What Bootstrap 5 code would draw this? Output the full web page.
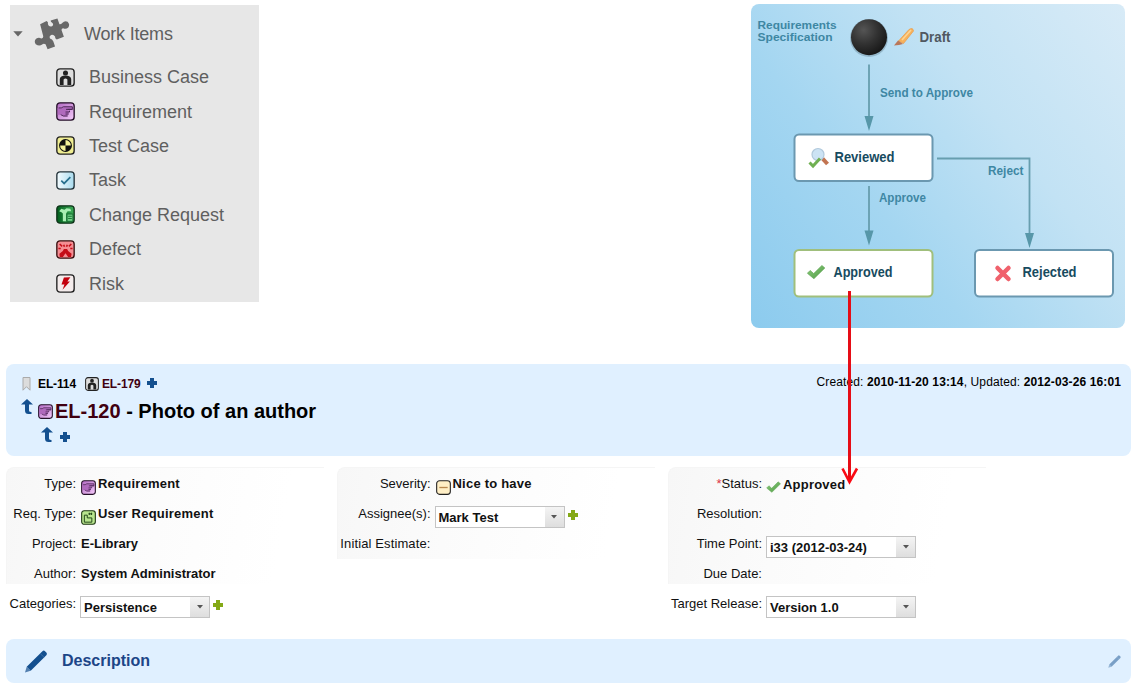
<!DOCTYPE html>
<html lang="en">
<head>
<meta charset="utf-8">
<meta name="viewport" content="width=device-width, initial-scale=1">
<title>EL-120 - Photo of an author</title>
<link href="https://cdn.jsdelivr.net/npm/bootstrap@5.3.0/dist/css/bootstrap.min.css" rel="stylesheet">
<style>
body{font-family:"Liberation Sans",Arial,sans-serif;font-size:13px;line-height:16px;color:#111;background:#fff;width:1134px;height:686px;overflow:hidden}
svg{display:block;flex:none}
.top-area{height:364px;padding:4px 9px 0 10px}
.tree{width:249px;height:297px;margin-top:1px;background:#e7e7e7;color:#5f5f5f;font-size:18px;line-height:20px}
.tree-head{height:55px;padding:3px 0 0 3px}
.tree-head svg:nth-child(2){margin-left:10px}
.tree-head span{margin-left:13px;letter-spacing:-.2px}
.tree-item{height:34.4px;padding-left:46px;gap:14px}
.flow{width:374px;height:324px;border-radius:8px;background:linear-gradient(52deg,#8ccbee 0%,#a4d6f1 35%,#c2e2f4 65%,#d8ebf7 100%)}
.flow text{font-family:"Liberation Sans Narrow","Liberation Sans",Arial,sans-serif;font-weight:700}
.panel-blue{margin:0 3px 0 6px;background:#e0f0ff;border-radius:8px}
.head{height:92px;padding:10px 10px 0 16px;font-size:12px;color:#000}
.ids{padding-top:2px;letter-spacing:-.12px}
.created{letter-spacing:.12px}
.maroon{color:#400010}
.navy{color:#14508f}
.green-plus{color:#84a917;margin:12px 0 0 3px}
.title-line{font-size:20px;line-height:24px;font-weight:700;margin-top:7px;margin-left:-1px}
.title-line .arrow-up{margin:-9px 5px 0 0}
.sub-line{margin:4px 0 0 19px;gap:7px}
.fields{padding:11px 0 0 6px;height:183px}
.field-col{width:331px}
.field-bg{background:linear-gradient(100deg,#f7f7f7 0%,#fbfbfb 35%,#fff 85%);border-radius:8px 0 0 0;width:318px;border-top:1px solid #f5f5f5;border-left:1px solid #f5f5f5}
.f-row{height:30px}
.f-label{text-align:right;flex:none}
.f-value{font-weight:700;margin-left:5px}
.f-icon{gap:2px;letter-spacing:.22px}
.f-icon svg{margin-top:4px}
.combo{height:22px;border:1px solid #c4c4c4;background:#fff;margin-top:8px;margin-left:-1px;font-weight:700}
.combo>span:first-child{padding:1px 0 0 3px}
.combo-btn{width:19px;background:linear-gradient(#f4f4f4,#dedede)}
.w-s{width:130px}.w-l{width:150px}
.desc{height:44px;padding:0 10px 0 18px;color:#1c4587}
.link-arrow{left:839px;top:290px}
.c1 .f-label{width:69px}.c2 .f-label{width:92.500px}.c3 .f-label{width:93px}
</style>
</head>
<body class="position-relative">
<svg width="0" height="0" class="position-absolute">
<defs>
<linearGradient id="gp" x1="0" x2="1" y1="0" y2="1"><stop offset="0" stop-color="#b066c0"/><stop offset="1" stop-color="#f6cdfc"/></linearGradient>
<linearGradient id="gg" x1="0" x2="1"><stop offset="0" stop-color="#005c1c"/><stop offset="1" stop-color="#3cae58"/></linearGradient>
<linearGradient id="gt" x1="0" x2="1"><stop offset="0" stop-color="#f4fcff"/><stop offset="1" stop-color="#a9dbee"/></linearGradient>
<linearGradient id="gc" x1="0" x2="1" y1="0" y2="1"><stop offset="0" stop-color="#8ccc7c"/><stop offset="1" stop-color="#4f9b45"/></linearGradient>
<radialGradient id="gb" cx=".35" cy=".3" r=".75"><stop offset="0" stop-color="#555"/><stop offset=".5" stop-color="#333"/><stop offset="1" stop-color="#161616"/></radialGradient>
<symbol id="i-case" viewBox="0 0 18 18"><rect x=".8" y=".8" width="16.4" height="16.4" rx="3" fill="#dedede" stroke="#222" stroke-width="1.3"/><circle cx="9" cy="4.800" r="2.400" fill="#222"/><path d="M3.600 16V10.500Q4 7.300 9 7.200Q14 7.300 14.400 10.500V16H10.800V11Q9 9 7.200 11V16Z" fill="#222"/></symbol>
<symbol id="i-req" viewBox="0 0 18 18"><rect x=".8" y=".8" width="16.4" height="16.4" rx="3" fill="url(#gp)" stroke="#251129" stroke-width="1.3"/><path d="M1.500 5.800H5L7 4.500H15.500V7H11V8H12.800V9.700H12V11.500H11V13.500H7.200L5 12H1.500Z" fill="#b06abd"/><path d="M2.500 5.600H5L7 4.500H15.500V7H9.500M15.500 7H11M12.800 8.200V9.500H9M12 11.400H9M11 13.300H7L4.500 12" fill="none" stroke="#4a2553" stroke-width=".9"/></symbol>
<symbol id="i-test" viewBox="0 0 18 18"><rect x=".8" y=".8" width="16.4" height="16.4" rx="3" fill="#f0ee92" stroke="#222" stroke-width="1.3"/><circle cx="9" cy="9" r="5.600" fill="#f5f29a" stroke="#111"/><path d="M9 9V3.400A5.600 5.600 0 0 0 3.400 9ZM9 9V14.600A5.600 5.600 0 0 0 14.600 9Z" fill="#111"/></symbol>
<symbol id="i-task" viewBox="0 0 18 18"><rect x=".8" y=".8" width="16.4" height="16.4" rx="3" fill="url(#gt)" stroke="#24343b" stroke-width="1.3"/><path d="M5 9.200L7.700 11.800L13.600 5.800" fill="none" stroke="#28708e" stroke-width="1.600"/></symbol>
<symbol id="i-change" viewBox="0 0 18 18"><rect x=".8" y=".8" width="16.4" height="16.4" rx="3" fill="url(#gg)" stroke="#10331a" stroke-width="1.3"/><path d="M3 6L5 3.500L8 4.500L10 3L13.500 3.500L14.500 6H11L9.500 8V15.500H6.500V8L5.200 6.800Z" fill="#a8eeb2"/><path d="M10.500 8.600H16V15.500H10.500Z" fill="#6ed285" stroke="#11642c" stroke-width=".8"/><path d="M11.500 10.700H15M11.500 12.800H15" stroke="#11642c" stroke-width=".8"/></symbol>
<symbol id="i-defect" viewBox="0 0 18 18"><rect x=".8" y=".8" width="16.4" height="16.4" rx="3" fill="#f58d93" stroke="#3a1212" stroke-width="1.3"/><path d="M7.500 8.500H10.500L11.500 10.500L14.800 13L14.200 16H11.500L9 12.600L6.500 16H3.600L3.200 13L6.500 10.500Z" fill="#c40d18"/><path d="M3.500 3.800L5.800 6M14.500 3.800L12.200 6M2.300 8H4.500M13.500 8H15.700M7.300 4.500L8 6.500M10.700 4.500L10 6.500" fill="none" stroke="#c40d18" stroke-width="1.500"/></symbol>
<symbol id="i-risk" viewBox="0 0 18 18"><rect x=".8" y=".8" width="16.4" height="16.4" rx="3" fill="#f4ecec" stroke="#222" stroke-width="1.3"/><path d="M7.500 3.300L13.600 3L10.800 7.200H13.200L6.200 15L8 10H5.200Z" fill="#c3000d"/></symbol>
<symbol id="i-user" viewBox="0 0 18 18"><rect x=".8" y=".8" width="16.4" height="16.4" rx="3" fill="#b8e58e" stroke="#1d3612" stroke-width="1.3"/><path d="M4 6.200H7.500V9.500H13V14.600H4ZM10 3.200V6M12.500 3.200V6M9 4.600H13.500" fill="none" stroke="#24481a" stroke-width="1.200"/></symbol>
<symbol id="i-minus" viewBox="0 0 18 18"><rect x=".8" y=".8" width="16.4" height="16.4" rx="3.500" fill="#ffefc6" stroke="#222" stroke-width="1.3"/><path d="M4 9H14" stroke="#b98950" stroke-width="1.600"/></symbol>
<symbol id="i-plus" viewBox="0 0 10 10"><path d="M3 0H7V3H10V7H7V10H3V7H0V3H3Z" fill="currentColor"/></symbol>
<symbol id="i-up" viewBox="0 0 12 15"><path d="M6 0L12 5.500H8V11.500Q8 13 10.500 13V15H7.500Q4 15 4 11.500V5.500H0Z" fill="#14508f"/></symbol>
<symbol id="i-check" viewBox="0 0 18 14"><path d="M.8 8.200L3.500 5.500L6.800 8.500L14.600 .8L17.400 3.200L7 13.400Z" fill="url(#gc)" stroke="#5da553" stroke-width=".6"/></symbol>
<symbol id="i-pen" viewBox="0 0 24 24"><path d="M.5 23.500L2.300 17.500L6.500 21.700Z" fill="#527fb0"/><path d="M2.300 17.500L18.700 1.400Q20 0 21.400 1.200L23 2.900Q24 4.200 22.800 5.500L6.500 21.700Z" fill="#14508f"/><path d="M16.400 3.700L20.600 7.800" stroke="#5b86b8" stroke-width=".6"/></symbol>
<symbol id="i-drop" viewBox="0 0 6 4"><path d="M0 0H6L3 3.500Z" fill="#555"/></symbol>
</defs>
</svg>

<section class="top-area d-flex justify-content-between align-items-start">
<aside class="tree">
<div class="tree-head d-flex align-items-center">
<svg width="10" height="6" viewBox="0 0 10 6"><path d="M.3 .3H9.700L5 5.600Z" fill="#666"/></svg>
<svg width="38" height="34" viewBox="100 55 112 100"><path d="M121 76L140 67Q146 70 144 76Q146 84 154 83Q162 79 158 73Q151 69 152 65L172 59L178 76Q184 77 187 72Q193 65 202 69Q210 77 204 86Q197 92 189 88Q184 88 184 93L191 113L170 121Q164 118 165 112Q160 105 153 108Q146 113 150 118Q157 120 160 127L165 142L143 150L137 135Q131 132 127 136Q118 142 108 135Q102 126 109 119Q117 114 124 118Q131 118 130 111Z" fill="#686868"/></svg>
<span>Work Items</span>
</div>
<div class="tree-item d-flex align-items-center"><svg width="19" height="19"><use href="#i-case"/></svg><span>Business Case</span></div>
<div class="tree-item d-flex align-items-center"><svg width="19" height="19"><use href="#i-req"/></svg><span>Requirement</span></div>
<div class="tree-item d-flex align-items-center"><svg width="19" height="19"><use href="#i-test"/></svg><span>Test Case</span></div>
<div class="tree-item d-flex align-items-center"><svg width="19" height="19"><use href="#i-task"/></svg><span>Task</span></div>
<div class="tree-item d-flex align-items-center"><svg width="19" height="19"><use href="#i-change"/></svg><span>Change Request</span></div>
<div class="tree-item d-flex align-items-center"><svg width="19" height="19"><use href="#i-defect"/></svg><span>Defect</span></div>
<div class="tree-item d-flex align-items-center"><svg width="19" height="19"><use href="#i-risk"/></svg><span>Risk</span></div>
</aside>

<div class="flow">
<svg width="374" height="324" viewBox="751 4 374 324">
<g fill="#3e87a3" font-size="13">
<text x="757.500" y="28.500" font-size="11" textLength="79" lengthAdjust="spacingAndGlyphs">Requirements</text>
<text x="757.500" y="40.500" font-size="11" textLength="75" lengthAdjust="spacingAndGlyphs">Specification</text>
<text x="880" y="97" textLength="93" lengthAdjust="spacingAndGlyphs">Send to Approve</text>
<text x="879" y="202" textLength="47" lengthAdjust="spacingAndGlyphs">Approve</text>
<text x="988" y="175.400" textLength="35.500" lengthAdjust="spacingAndGlyphs">Reject</text>
</g>
<circle cx="869" cy="38" r="19" fill="#7d9fb0" opacity=".6"/>
<circle cx="869" cy="37.200" r="18" fill="url(#gb)"/>
<path d="M898.500 41L909 29.500Q913 27 913.500 31L903.500 43.500Z" fill="#f7b25c" stroke="#e99b49" stroke-width=".7"/>
<path d="M902 40L911 30" stroke="#fcd495" stroke-width="1.600"/>
<path d="M894 45.500L898 40.500L903 44L899 45Z" fill="#b9775a"/>
<text x="919.500" y="42" font-size="14.500" fill="#505860" textLength="31" lengthAdjust="spacingAndGlyphs">Draft</text>
<g fill="none" stroke="#679eaf" stroke-width="1.800"><path d="M869 64.500V118M869 186V232M937 158.500H1029.500V236"/></g>
<path d="M864.500 116H873.500L869 131ZM864.500 230.500H873.500L869 245.500ZM1025 233H1034L1029.500 248Z" fill="#5797a9"/>
<rect x="794.500" y="134.500" width="138" height="46.500" rx="4.500" fill="#fff" stroke="#6b98b0" stroke-width="2"/>
<rect x="794.500" y="250" width="138" height="46.500" rx="4.500" fill="#fff" stroke="#a0bf7c" stroke-width="2"/>
<rect x="975" y="250" width="138" height="46.500" rx="4.500" fill="#fff" stroke="#6b98b0" stroke-width="2"/>
<path d="M822.500 158.500L827.500 164" stroke="#c27451" stroke-width="4"/>
<circle cx="818" cy="154.500" r="6" fill="#cce3f4" stroke="#b1c9dc" stroke-width="1.200"/>
<path d="M809.500 162.500L813 166L820 158.500" fill="none" stroke="#70b052" stroke-width="3"/>
<svg x="806.500" y="264.500" width="19" height="15"><use href="#i-check"/></svg>
<path d="M997.500 268L1008.500 279M1008.500 268L997.500 279" stroke="#f0616c" stroke-width="4.500" stroke-linecap="round"/>
<g fill="#174b60" font-size="14.500">
<text x="834.500" y="162" textLength="60" lengthAdjust="spacingAndGlyphs">Reviewed</text>
<text x="833.500" y="277.400" textLength="59" lengthAdjust="spacingAndGlyphs">Approved</text>
<text x="1022.500" y="277.400" textLength="54" lengthAdjust="spacingAndGlyphs">Rejected</text>
</g>
</svg>
</div>
</section>

<header class="panel-blue head">
<div class="d-flex justify-content-between align-items-start">
<div class="ids d-flex align-items-center fw-bold">
<svg width="9" height="14" viewBox="0 0 9 14"><path d="M1 .5H8V13.200L4.500 9.700L1 13.200Z" fill="#dcdcdc" stroke="#aaa"/></svg>
<span style="margin-left:7px">EL-114</span>
<svg width="14" height="14" style="margin-left:9px"><use href="#i-case"/></svg>
<span class="maroon" style="margin-left:3px">EL-179</span>
<svg width="10" height="10" class="navy" style="margin:-3px 0 0 6px"><use href="#i-plus"/></svg>
</div>
<div class="created">Created: <b>2010-11-20 13:14</b>, Updated: <b>2012-03-26 16:01</b></div>
</div>
<div class="title-line d-flex align-items-center"><svg width="12" height="15" class="arrow-up"><use href="#i-up"/></svg><svg width="15" height="15" style="margin-right:2px"><use href="#i-req"/></svg><span><span class="maroon">EL-120</span> - Photo of an author</span></div>
<div class="sub-line d-flex align-items-center"><svg width="12" height="15"><use href="#i-up"/></svg><svg width="10" height="10" class="navy mt-1"><use href="#i-plus"/></svg></div>
</header>

<main class="fields d-flex">
<div class="field-col c1"><div class="field-bg" style="height:117px">
<div class="f-row d-flex pt-2"><span class="f-label">Type:</span><span class="f-value f-icon d-flex"><svg width="15" height="15"><use href="#i-req"/></svg>Requirement</span></div>
<div class="f-row d-flex pt-2"><span class="f-label">Req. Type:</span><span class="f-value f-icon d-flex"><svg width="15" height="15"><use href="#i-user"/></svg>User Requirement</span></div>
<div class="f-row d-flex pt-2"><span class="f-label">Project:</span><span class="f-value">E-Library</span></div>
<div class="f-row d-flex pt-2"><span class="f-label">Author:</span><span class="f-value">System Administrator</span></div>
<div class="f-row d-flex"><span class="f-label pt-2">Categories:</span><span class="f-value d-flex"><span class="combo w-s d-flex justify-content-between align-items-center"><span>Persistence</span><span class="combo-btn h-100 d-flex align-items-center justify-content-center"><svg width="6" height="4"><use href="#i-drop"/></svg></span></span><svg width="10" height="10" class="green-plus"><use href="#i-plus"/></svg></span></div>
</div></div>
<div class="field-col c2"><div class="field-bg" style="height:92px">
<div class="f-row d-flex pt-2"><span class="f-label">Severity:</span><span class="f-value f-icon d-flex"><svg width="15" height="15"><use href="#i-minus"/></svg>Nice to have</span></div>
<div class="f-row d-flex"><span class="f-label pt-2">Assignee(s):</span><span class="f-value d-flex"><span class="combo w-s d-flex justify-content-between align-items-center"><span>Mark Test</span><span class="combo-btn h-100 d-flex align-items-center justify-content-center"><svg width="6" height="4"><use href="#i-drop"/></svg></span></span><svg width="10" height="10" class="green-plus"><use href="#i-plus"/></svg></span></div>
<div class="f-row d-flex pt-2"><span class="f-label" style="letter-spacing:.12px">Initial Estimate:</span></div>
</div></div>
<div class="field-col c3"><div class="field-bg" style="height:117px">
<div class="f-row d-flex pt-2"><span class="f-label"><span class="text-danger">*</span>Status:</span><span class="f-value f-icon d-flex" style="margin-left:4px"><svg width="15" height="12" style="margin-top:5px"><use href="#i-check"/></svg><span style="padding-top:1px">Approved</span></span></div>
<div class="f-row d-flex pt-2"><span class="f-label">Resolution:</span></div>
<div class="f-row d-flex"><span class="f-label pt-2">Time Point:</span><span class="f-value"><span class="combo w-l d-flex justify-content-between align-items-center"><span>i33 (2012-03-24)</span><span class="combo-btn h-100 d-flex align-items-center justify-content-center"><svg width="6" height="4"><use href="#i-drop"/></svg></span></span></span></div>
<div class="f-row d-flex pt-2"><span class="f-label">Due Date:</span></div>
<div class="f-row d-flex"><span class="f-label pt-2">Target Release:</span><span class="f-value"><span class="combo w-l d-flex justify-content-between align-items-center"><span>Version 1.0</span><span class="combo-btn h-100 d-flex align-items-center justify-content-center"><svg width="6" height="4"><use href="#i-drop"/></svg></span></span></span></div>
</div></div>
</main>

<section class="panel-blue desc d-flex align-items-center">
<svg width="24" height="23"><use href="#i-pen"/></svg>
<span class="fw-bold fs-6" style="margin-left:14px">Description</span>
<svg width="13" height="13" class="ms-auto opacity-50"><use href="#i-pen"/></svg>
</section>

<svg class="link-arrow position-absolute" width="22" height="196" viewBox="839 290 22 196"><path d="M849.500 291V480" stroke="#e60d16" stroke-width="3"/><path d="M842.500 468.500L849.500 482L857 468.500" fill="none" stroke="#fa0a14" stroke-width="2.600"/></svg>
<script src="https://cdn.jsdelivr.net/npm/bootstrap@5.3.0/dist/js/bootstrap.bundle.min.js"></script>
</body>
</html>
